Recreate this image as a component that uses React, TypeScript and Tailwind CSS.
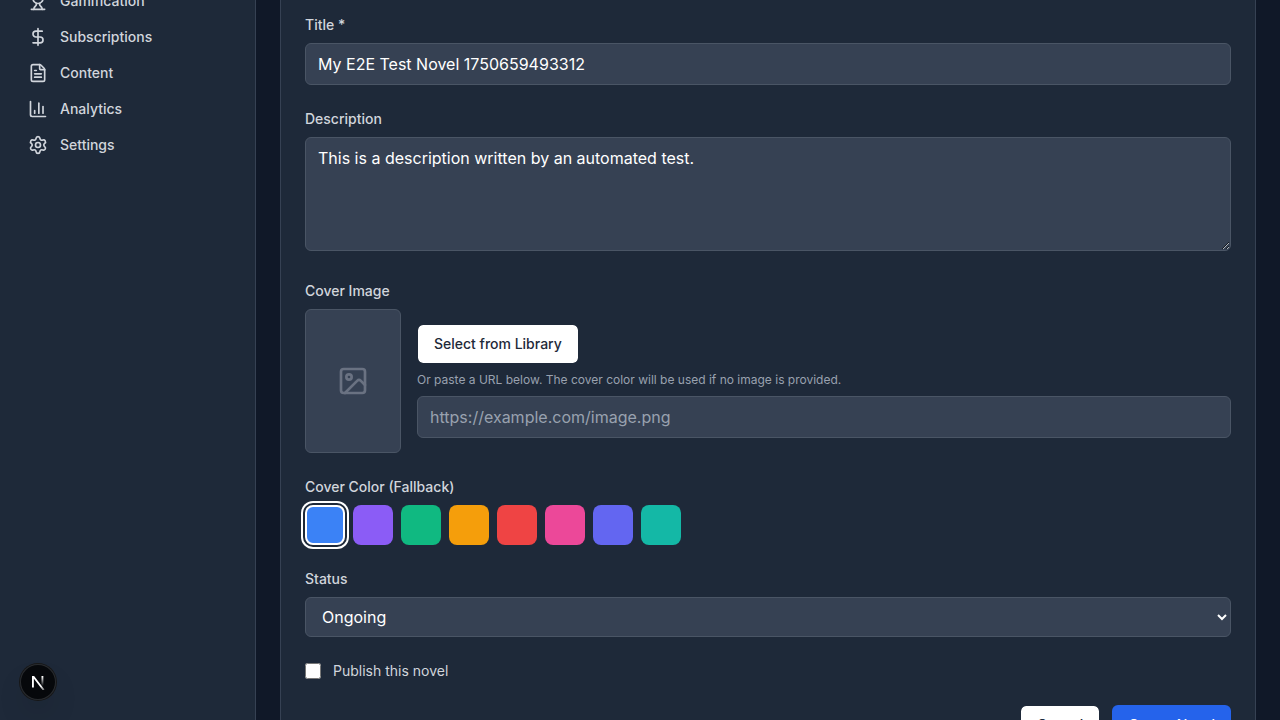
import { useState } from 'react';
import type { ReactNode } from 'react';
import { ChartColumn, DollarSign, FileText, Image, Settings, Trophy } from 'lucide-react';
import type { LucideIcon } from 'lucide-react';

const navItems: { label: string; icon: LucideIcon }[] = [
  { label: 'Gamification', icon: Trophy },
  { label: 'Subscriptions', icon: DollarSign },
  { label: 'Content', icon: FileText },
  { label: 'Analytics', icon: ChartColumn },
  { label: 'Settings', icon: Settings },
];

const coverColors = [
  { name: 'Blue', className: 'bg-[#3b82f6]' },
  { name: 'Violet', className: 'bg-[#8b5cf6]' },
  { name: 'Green', className: 'bg-[#10b981]' },
  { name: 'Amber', className: 'bg-[#f59e0b]' },
  { name: 'Red', className: 'bg-[#ef4444]' },
  { name: 'Pink', className: 'bg-[#ec4899]' },
  { name: 'Indigo', className: 'bg-[#6366f1]' },
  { name: 'Teal', className: 'bg-[#14b8a6]' },
];

const fieldClass =
  'w-full rounded-md border border-gray-600 bg-gray-700 px-3 py-2 text-base text-white placeholder:text-gray-400';
const labelClass = 'mb-2 block text-sm font-medium text-gray-300';
const outlineButtonClass =
  'h-10 rounded-md border border-gray-800 bg-white bg-clip-padding px-4 text-sm font-medium text-gray-800';

function Field({ id, label, children }: { id: string; label: string; children: ReactNode }) {
  return (
    <div>
      <label htmlFor={id} className={labelClass}>
        {label}
      </label>
      {children}
    </div>
  );
}

function Sidebar() {
  return (
    <aside className="w-64 shrink-0 border-r border-gray-700 bg-gray-800">
      <nav className="-mt-[17px] flex flex-col px-4">
        {navItems.map(({ label, icon: Icon }) => (
          <a
            key={label}
            href="#"
            className="flex items-center gap-3 rounded-md px-3 py-2 text-sm font-medium text-gray-300"
          >
            <Icon className="size-5" aria-hidden="true" />
            {label}
          </a>
        ))}
      </nav>
    </aside>
  );
}

function DevBadge() {
  return (
    <button
      type="button"
      aria-label="Open developer tools"
      className="fixed bottom-5 left-5 flex size-9 items-center justify-center rounded-full bg-black/80 shadow-[0_0_0_1px_#171717,inset_0_0_0_1px_rgba(255,255,255,0.14),0_16px_32px_-8px_rgba(0,0,0,0.24)]"
    >
      <svg className="size-10 shrink-0" viewBox="0 0 40 40" fill="none" aria-hidden="true">
        <defs>
          <linearGradient id="diagonal" x1="9.96" y1="11.12" x2="15.48" y2="17.97" gradientUnits="userSpaceOnUse">
            <stop stopColor="white" />
            <stop offset="1" stopColor="white" stopOpacity="0" />
          </linearGradient>
          <linearGradient id="stem" x1="11.82" y1="1.4" x2="11.79" y2="11" gradientUnits="userSpaceOnUse">
            <stop stopColor="white" />
            <stop offset="1" stopColor="white" stopOpacity="0" />
          </linearGradient>
          <clipPath id="letter-bounds">
            <rect x="1" y="1" width="13" height="14" />
          </clipPath>
        </defs>
        <g transform="translate(12.6 13)" strokeWidth="1.86" clipPath="url(#letter-bounds)">
          <path d="M13.3 15.2 L2.34 1 V12.6" stroke="url(#diagonal)" />
          <path d="M11.825 1 V13.1" stroke="url(#stem)" />
        </g>
      </svg>
    </button>
  );
}

export default function App() {
  const [color, setColor] = useState('Blue');

  return (
    <div className="flex h-screen overflow-hidden bg-gray-900 font-['Inter',sans-serif] text-white">
      <Sidebar />
      <main className="min-w-0 flex-1 px-6">
        <form className="space-y-6 border-x border-gray-700 bg-gray-800 px-6 pt-[15px] pb-6">
          <Field id="title" label="Title *">
            <input id="title" type="text" defaultValue="My E2E Test Novel 1750659493312" className={fieldClass} />
          </Field>

          <Field id="description" label="Description">
            <textarea
              id="description"
              rows={4}
              defaultValue="This is a description written by an automated test."
              className={fieldClass}
            />
          </Field>

          <Field id="cover-url" label="Cover Image">
            <div className="flex items-center gap-4">
              <div className="flex h-36 w-24 shrink-0 items-center justify-center rounded-md border border-gray-600 bg-gray-700">
                <Image className="size-8 text-gray-500" aria-hidden="true" />
              </div>
              <div className="flex min-w-0 flex-1 flex-col items-start gap-2">
                <button type="button" className={outlineButtonClass}>
                  Select from Library
                </button>
                <p className="text-xs text-gray-400">
                  Or paste a URL below. The cover color will be used if no image is provided.
                </p>
                <input id="cover-url" type="url" placeholder="https://example.com/image.png" className={fieldClass} />
              </div>
            </div>
          </Field>

          <div role="group" aria-labelledby="cover-color">
            <span id="cover-color" className={labelClass}>
              Cover Color (Fallback)
            </span>
            <div className="flex gap-2">
              {coverColors.map(({ name, className }) => (
                <button
                  key={name}
                  type="button"
                  aria-label={name}
                  aria-pressed={color === name}
                  onClick={() => setColor(name)}
                  className={`size-10 rounded-lg border-2 ${className} ${
                    color === name
                      ? 'border-white ring-2 ring-white ring-offset-2 ring-offset-gray-800'
                      : 'border-transparent'
                  }`}
                />
              ))}
            </div>
          </div>

          <Field id="status" label="Status">
            <select
              id="status"
              defaultValue="Ongoing"
              className="h-10 w-full rounded-md border border-gray-600 bg-gray-700 px-3 text-base text-white"
            >
              <option>Ongoing</option>
              <option>Completed</option>
              <option>Hiatus</option>
            </select>
          </Field>

          <div className="flex items-center">
            <input id="publish" type="checkbox" className="size-4" />
            <label htmlFor="publish" className="ml-3 text-sm text-gray-300">
              Publish this novel
            </label>
          </div>

          <div className="flex justify-end gap-3">
            <button type="button" className={outlineButtonClass}>
              Cancel
            </button>
            <button type="submit" className="h-10 rounded-md bg-[#2563eb] px-4 text-sm font-medium text-white">
              Create Novel
            </button>
          </div>
        </form>
      </main>
      <DevBadge />
    </div>
  );
}
